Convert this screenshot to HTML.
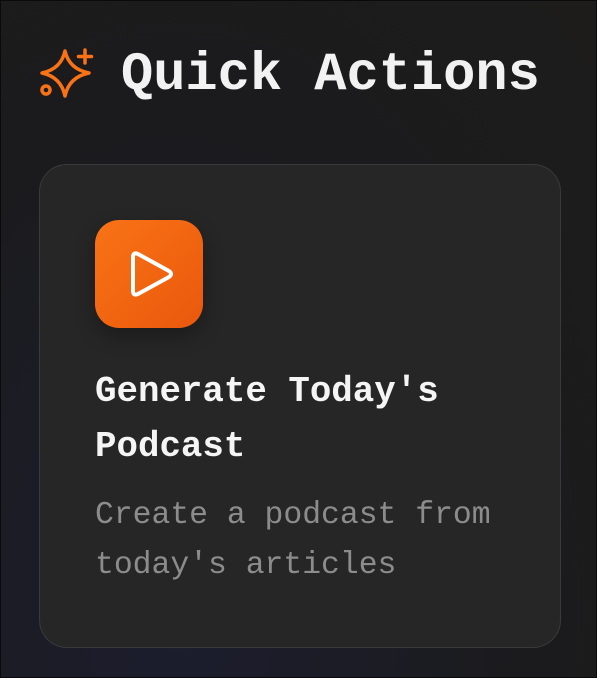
<!DOCTYPE html>
<html><head><style>
html,body{margin:0;padding:0;}
body{width:597px;height:678px;overflow:hidden;background:radial-gradient(ellipse at 30% 90%,#1c1d2e 0%,#1b1b1d 60%,#1d1c1b 100%);font-family:"Liberation Mono",monospace;position:relative;box-shadow:inset 0 0 0 1px #0a0a0a;}
.t{position:absolute;left:121px;top:44px;font-size:53.7px;font-weight:bold;color:#f2f2f2;line-height:64px;white-space:nowrap;}
.card{position:absolute;left:39px;top:164px;width:520px;height:482px;background:#262626;border:1px solid #3a3a3c;border-radius:28px;}
.ic{position:absolute;left:55px;top:55px;width:108px;height:108px;border-radius:24px;background:linear-gradient(135deg,#f97316,#ea580c);box-shadow:0 8px 20px rgba(0,0,0,.3);}
.h{position:absolute;left:55px;top:199px;font-size:35.8px;font-weight:bold;color:#f5f5f5;line-height:55px;}
.d{position:absolute;left:55px;top:326px;font-size:31.4px;color:#8c8c8c;line-height:50px;}
</style></head><body>
<svg style="position:absolute;left:0;top:0" width="120" height="120" viewBox="0 0 120 120" fill="none" stroke="#f97316" stroke-width="3.5" stroke-linecap="round" stroke-linejoin="round">
<path d="M65 51 Q69 69 89 73 Q69 77 65 96 Q61 77 42 73 Q61 69 65 51 Z"/>
<path d="M85 50 v13 M78.5 56.5 h13"/>
<circle cx="46" cy="90" r="4"/>
</svg>
<div class="t">Quick Actions</div>
<div class="card">
<div class="ic"><svg width="108" height="108" viewBox="0 0 108 108" fill="none" stroke="#fff" stroke-width="4" stroke-linejoin="round"><path d="M38 37 Q38 32 43 34 L74 51 Q78 54 74 57 L43 74 Q38 76 38 71 Z"/></svg></div>
<div class="h">Generate Today's<br>Podcast</div>
<div class="d">Create a podcast from<br>today's articles</div>
</div>
</body></html>
